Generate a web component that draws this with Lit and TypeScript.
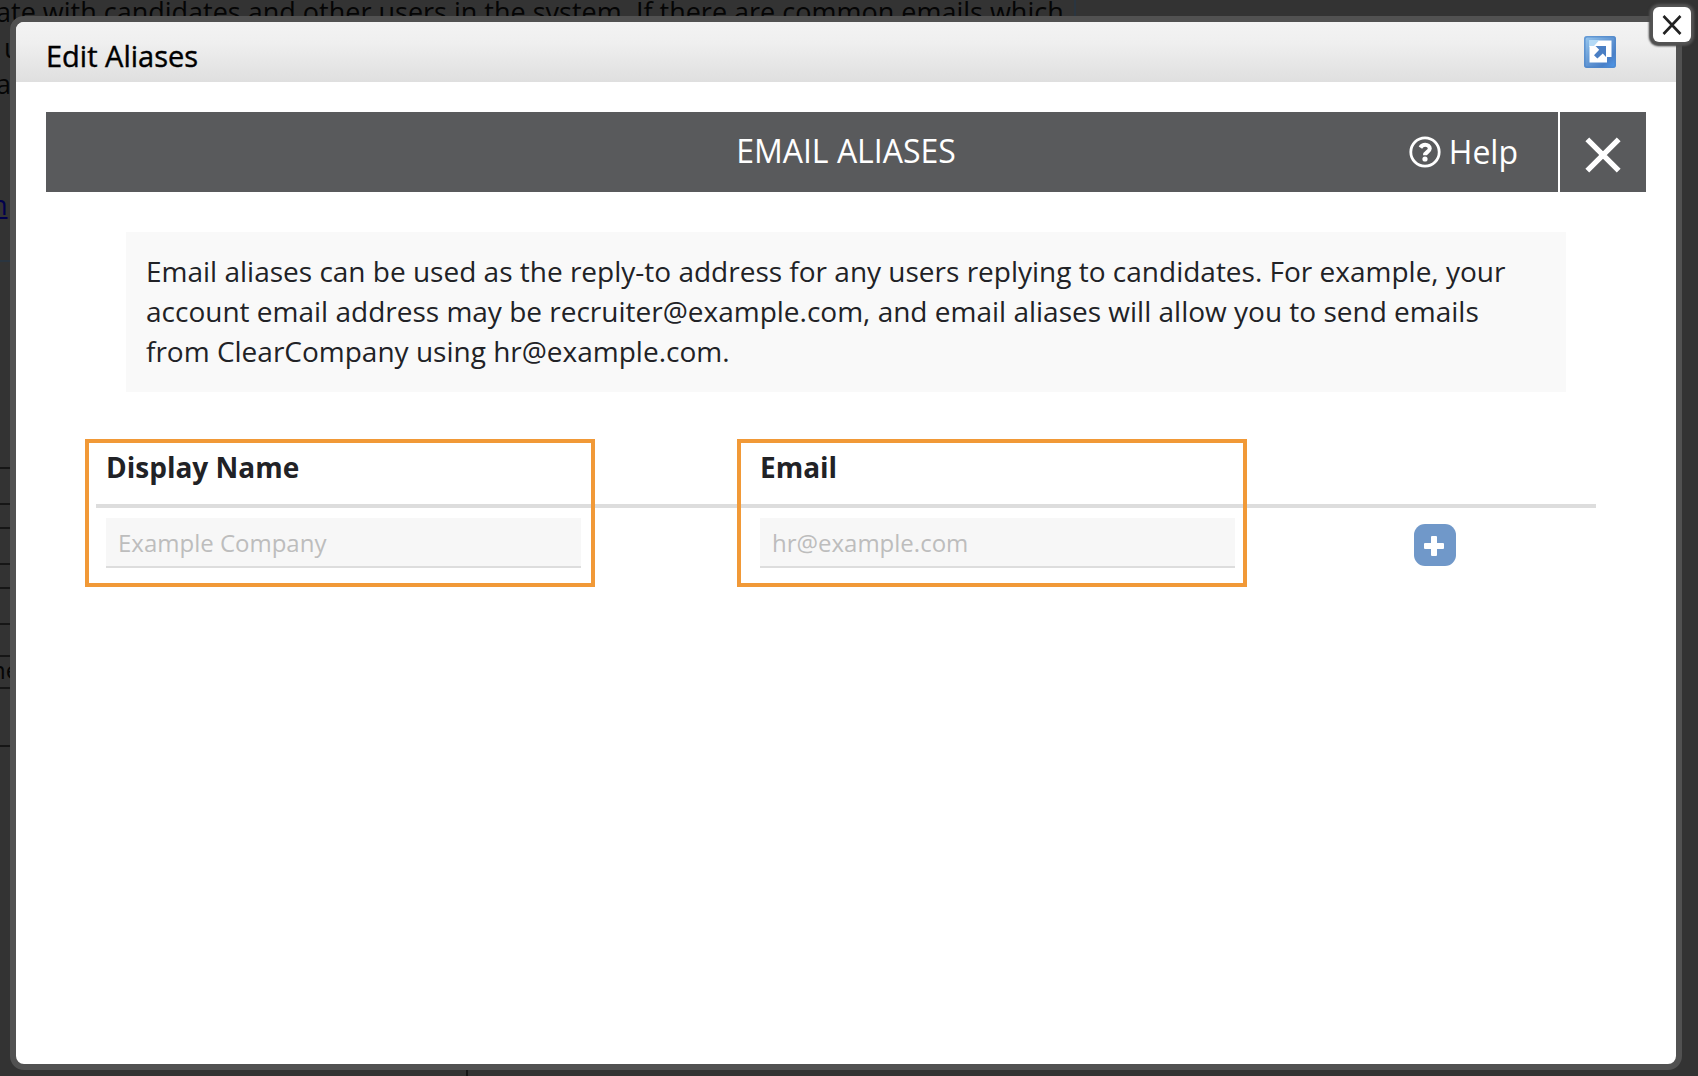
import { LitElement, html, css } from "lit";
import { customElement } from "lit/decorators.js";

@customElement("page-behind")
class PageBehind extends LitElement {
  static styles = css`
    :host {
      display: block;
      overflow: hidden;
      background: #333;
      color: #050505;
      font: 27px/36px "Open Sans", sans-serif;
      white-space: nowrap;
    }
    .intro {
      box-sizing: border-box;
      width: 1076px;
      height: 266px;
      margin-top: -6px;
      border-right: 2px solid #2a3540;
    }
    .line {
      margin: 0 0 0 -4px;
    }
    .indent {
      padding-left: 8px;
    }
    .more {
      display: block;
      margin: 85px 0 0 -9px;
      color: #00004c;
    }
    .rule {
      box-sizing: border-box;
      width: 468px;
      border-bottom: 2px solid #161616;
    }
    .h24 { height: 24px; }
    .h32 { height: 32px; }
    .h36 { height: 36px; }
    .h58 { height: 58px; }
    .first {
      height: 209px;
      border-top: 2px solid #2a3540;
    }
    .cell {
      text-indent: -9px;
      font-size: 24px;
      line-height: 26px;
    }
    .rest {
      height: 400px;
      border-right: 2px solid #161616;
    }
  `;
  render() {
    return html`
      <div class="intro">
        <p class="line">ate with candidates and other users in the system. If there are common emails which</p>
        <p class="line indent">u</p>
        <p class="line">a</p>
        <a class="more" href="#">n</a>
      </div>
      <div class="rule first"></div>
      <div class="rule h36"></div>
      <div class="rule h24"></div>
      <div class="rule h36"></div>
      <div class="rule h24"></div>
      <div class="rule h36"></div>
      <div class="rule h32"></div>
      <div class="rule h32 cell">ne</div>
      <div class="rule h58"></div>
      <div class="rule rest"></div>
    `;
  }
}

@customElement("alias-editor")
class AliasEditor extends LitElement {
  static styles = css`
    :host {
      display: block;
      padding: 30px;
      color: #212226;
      font: 28px/40px "Open Sans", sans-serif;
    }
    .bar {
      display: grid;
      grid-template-columns: 1fr auto 1fr;
      height: 80px;
      background: #595a5c;
      color: #fff;
    }
    .heading {
      grid-column: 2;
      margin: 0;
      font-size: 32px;
      font-weight: 400;
      line-height: 77px;
    }
    .actions {
      display: flex;
      justify-content: flex-end;
    }
    .help {
      display: flex;
      align-items: center;
      gap: 8px;
      padding: 0 40px;
      color: #fff;
      font-size: 32px;
      text-decoration: none;
    }
    .help svg {
      display: block;
    }
    .close {
      box-sizing: border-box;
      width: 88px;
      padding: 8px 0 0;
      border: 0;
      border-left: 2px solid #fff;
      background: none;
    }
    .note {
      margin: 40px 80px;
      padding: 19px 20px 21px;
      background: #f9f9f9;
    }
    .note p {
      margin: 0;
    }
    .aliases {
      position: relative;
      margin: 0 50px;
    }
    .table {
      width: 100%;
      border-collapse: separate;
      border-spacing: 0;
      table-layout: fixed;
    }
    .wide {
      width: 43.6%;
    }
    .th {
      box-sizing: border-box;
      height: 76px;
      padding: 15px 10px 0;
      border-bottom: 4px solid #ddd;
      text-align: left;
      vertical-align: top;
    }
    .td {
      padding: 10px 10px 0;
      vertical-align: middle;
    }
    .field {
      display: block;
      box-sizing: border-box;
      width: 75%;
      height: 50px;
      padding: 0 12px;
      border: 0;
      border-bottom: 2px solid #ddd;
      border-radius: 0;
      outline: 0;
      background: #f7f7f7;
      color: #212226;
      font: 24px/40px "Open Sans", sans-serif;
    }
    .field::placeholder {
      color: #bdbdbd;
      opacity: 1;
    }
    .add {
      display: flex;
      align-items: center;
      justify-content: center;
      width: 42px;
      height: 42px;
      margin-top: 4px;
      padding: 0;
      border: 0;
      border-radius: 11px;
      background: #7098c9;
    }
    .mark {
      position: absolute;
      top: 7px;
      box-sizing: border-box;
      width: 34%;
      height: 148px;
      border: 4px solid #f19937;
      pointer-events: none;
    }
    .mark-name {
      left: -11px;
    }
    .mark-email {
      left: calc(43.6% - 13px);
    }
  `;
  render() {
    return html`
      <header class="bar">
        <h1 class="heading">EMAIL ALIASES</h1>
        <div class="actions">
          <a class="help" href="#">
            <svg width="32" height="32" viewBox="0 0 32 32" fill="none" stroke="#fff" aria-hidden="true">
              <circle cx="16" cy="16" r="14.2" stroke-width="2.8" />
              <path d="M11.4 11.6C12.6 9.6 14.2 8.8 16.2 8.8C18.8 8.8 20.8 10.4 20.8 12.6C20.8 16 16 16 16 19.2" stroke-width="4" />
              <circle cx="16" cy="23" r="2.6" fill="#fff" stroke="none" />
            </svg>
            <span>Help</span>
          </a>
          <button class="close" type="button" aria-label="Close">
            <svg width="36" height="36" viewBox="0 0 36 36" stroke="#fff" stroke-width="5.4" aria-hidden="true">
              <path d="M2.3 2.3L33.7 33.7M33.7 2.3L2.3 33.7" />
            </svg>
          </button>
        </div>
      </header>
      <section class="note">
        <p>
          Email aliases can be used as the reply-to address for any users replying to candidates. For example,
          your account email address may be recruiter@example.com, and email aliases will allow you to send
          emails from ClearCompany using hr@example.com.
        </p>
      </section>
      <div class="aliases">
        <table class="table">
          <thead>
            <tr>
              <th class="th wide" scope="col"><label for="name">Display Name</label></th>
              <th class="th wide" scope="col"><label for="email">Email</label></th>
              <th class="th"></th>
            </tr>
          </thead>
          <tbody>
            <tr>
              <td class="td"><input class="field" id="name" type="text" placeholder="Example Company" /></td>
              <td class="td"><input class="field" id="email" type="email" placeholder="hr@example.com" /></td>
              <td class="td">
                <button class="add" type="button" aria-label="Add alias">
                  <svg width="22" height="22" viewBox="0 0 22 22" fill="#fff" aria-hidden="true">
                    <rect x="0" y="9" width="20" height="6" rx="1" />
                    <rect x="7" y="2" width="6" height="20" rx="1" />
                  </svg>
                </button>
              </td>
            </tr>
          </tbody>
        </table>
        <div class="mark mark-name"></div>
        <div class="mark mark-email"></div>
      </div>
    `;
  }
}

@customElement("app-root")
class AppRoot extends LitElement {
  static styles = css`
    :host {
      display: grid;
      grid-template: 100vh / minmax(0, 1fr);
      overflow: hidden;
    }
    .behind,
    .overlay {
      grid-area: 1 / 1;
      min-width: 0;
      min-height: 0;
    }
    .overlay {
      display: flex;
      z-index: 1;
      padding: 16px 16px 6px 10px;
    }
    .dialog {
      position: relative;
      flex: 1;
      border: 6px solid #515151;
      border-radius: 14px;
      background: #fff;
    }
    .title-bar {
      display: flex;
      align-items: flex-start;
      justify-content: space-between;
      box-sizing: border-box;
      height: 60px;
      padding: 14px 60px 0 30px;
      border-radius: 8px 8px 0 0;
      background: linear-gradient(#f3f3f3, #efefef 35%, #dfdfdf);
    }
    .title {
      margin: 0;
      color: #000;
      font: 400 29px/40px "Open Sans", sans-serif;
      -webkit-text-stroke: 0.4px #000;
    }
    .icon-button {
      display: block;
      padding: 0;
      border: 0;
      background: none;
    }
    .icon-button svg {
      display: block;
    }
    .dismiss {
      position: absolute;
      top: -15px;
      right: -15px;
      display: flex;
      align-items: center;
      justify-content: center;
      width: 38px;
      height: 35px;
      padding: 0;
      border: 0;
      border-radius: 6px;
      background: #fff;
      box-shadow: 0 0 3px 3px #555, -1px 1px 2px 3px #444;
    }
  `;
  render() {
    return html`
      <page-behind class="behind"></page-behind>
      <div class="overlay">
        <div class="dialog" role="dialog" aria-label="Edit Aliases">
          <div class="title-bar">
            <h2 class="title">Edit Aliases</h2>
            <button class="icon-button" type="button" aria-label="Open in full window">
              <svg width="32" height="32" viewBox="0 0 32 32" aria-hidden="true">
                <defs>
                  <linearGradient id="face" x1="0" y1="0" x2="1" y2="1">
                    <stop offset="0" stop-color="#9bcaf0" />
                    <stop offset="0.4" stop-color="#6b9fd8" />
                    <stop offset="0.75" stop-color="#4a80c8" />
                    <stop offset="1" stop-color="#4f9cf0" />
                  </linearGradient>
                </defs>
                <rect width="32" height="32" rx="3" fill="url(#face)" />
                <rect x="0.8" y="0.8" width="30.4" height="30.4" rx="2.4" fill="none" stroke="#4f86c9" stroke-opacity="0.7" stroke-width="1.6" />
                <path d="M5 4H15V11H5Z" fill="#b4daf6" />
                <path d="M5.5 10H10L15 4.5H27.5V21H23V26.5H5.5Z" fill="#fff" />
                <path d="M11.5 10H22V21L18.8 17.6L13.4 22.6L10 19.2L15.2 13.8Z" fill="#4a7fc4" />
              </svg>
            </button>
          </div>
          <alias-editor></alias-editor>
          <button class="dismiss" type="button" aria-label="Close dialog">
            <svg width="20" height="20" viewBox="0 0 20 20" stroke="#222" stroke-width="2.6" aria-hidden="true">
              <path d="M1.5 1L18.5 19M18.5 1L1.5 19" />
            </svg>
          </button>
        </div>
      </div>
    `;
  }
}
